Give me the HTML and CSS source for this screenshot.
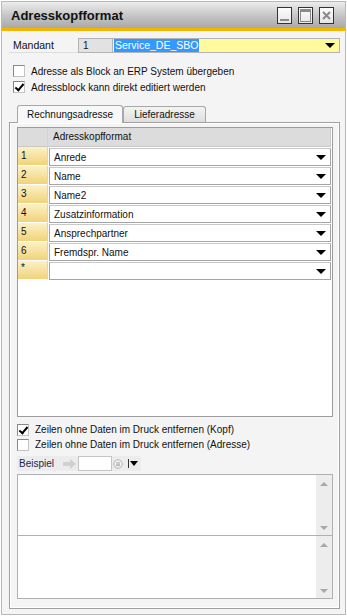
FILE: index.html
```html
<!DOCTYPE html>
<html>
  <head>
    <meta charset="utf-8">
    <title>Adresskopfformat</title>
    <link rel="stylesheet" href="styles.css">
  </head>
  <body>
  <div class="window">
    <header class="titlebar">
      <span class="title">Adresskopfformat</span>
      <div class="controls">
        <span class="ctl"><svg width="13" height="15" viewBox="0 0 13 15"><rect x="2" y="11" width="9" height="2" fill="#8a8a8a"/></svg></span>
        <span class="ctl"><svg width="13" height="15" viewBox="0 0 13 15"><rect x="1.5" y="1.5" width="10" height="12" fill="none" stroke="#8a8a8a"/><rect x="2" y="2" width="9" height="2" fill="#8a8a8a"/></svg></span>
        <span class="ctl"><svg width="13" height="15" viewBox="0 0 13 15"><path d="M3 4 L10 11 M10 4 L3 11" stroke="#8a8a8a" stroke-width="2"/></svg></span>
      </div>
    </header>

    <main class="content">
      <div class="mandant">
        <span class="label">Mandant</span>
        <span class="code">1</span>
        <span class="combo"><span class="sel">Service_DE_SBO</span><i class="arrow"></i></span>
      </div>

      <label class="check"><span class="box"></span>Adresse als Block an ERP System übergeben</label>
      <label class="check"><span class="box on"></span>Adressblock kann direkt editiert werden</label>

      <div class="tabs">
        <span class="tab active">Rechnungsadresse</span>
        <span class="tab">Lieferadresse</span>
      </div>

      <section class="panel">
        <div class="grid">
          <div class="row head"><span class="num"></span><span class="hcell">Adresskopfformat</span></div>
          <div class="row"><span class="num">1</span><span class="cell">Anrede<i class="arrow"></i></span></div>
          <div class="row"><span class="num">2</span><span class="cell">Name<i class="arrow"></i></span></div>
          <div class="row"><span class="num">3</span><span class="cell">Name2<i class="arrow"></i></span></div>
          <div class="row"><span class="num">4</span><span class="cell">Zusatzinformation<i class="arrow"></i></span></div>
          <div class="row"><span class="num">5</span><span class="cell">Ansprechpartner<i class="arrow"></i></span></div>
          <div class="row"><span class="num">6</span><span class="cell">Fremdspr. Name<i class="arrow"></i></span></div>
          <div class="row"><span class="num star">*</span><span class="cell"><i class="arrow"></i></span></div>
        </div>

        <label class="check small"><span class="box on"></span>Zeilen ohne Daten im Druck entfernen (Kopf)</label>
        <label class="check small"><span class="box"></span>Zeilen ohne Daten im Druck entfernen (Adresse)</label>

        <div class="beispiel">
          <span class="blabel">Beispiel</span>
          <svg width="14" height="10" viewBox="0 0 14 10"><path d="M0 3 H7 V0 L13 5 L7 10 V7 H0 Z" fill="#d0d0d0"/></svg>
          <span class="binput"></span>
          <svg width="10" height="10" viewBox="0 0 10 10"><circle cx="5" cy="5" r="4.2" fill="#f4f4f4" stroke="#b0b0b0"/><path d="M3 3.8 H7 M3 5.2 H7 M3 6.6 H7" stroke="#a0a0a0" stroke-width="0.8"/></svg>
          <span class="bsep"></span>
          <i class="arrow"></i>
        </div>

        <div class="memo">
          <div class="scroll"><i class="up"></i><i class="down"></i></div>
        </div>
        <div class="memo second">
          <div class="scroll"><i class="up"></i><i class="down"></i></div>
        </div>
      </section>
    </main>
  </div>
  </body>
</html>
```

FILE: styles.css
```css
* {
  box-sizing: border-box;
  margin: 0;
}

body, html {
  margin: 0;
  width: 100%;
  height: 100%;
  background: #fff;
  font-family: "Liberation Sans", Arial, sans-serif;
  font-size: 10px;
  color: #111;
}

.window {
  margin: 1px 0 0 1px;
  width: 345px;
  height: 614px;
  border: 1px solid #b8b8b8;
  background: #f4f4f4;
  display: flex;
  flex-direction: column;
}

.titlebar {
  height: 29px;
  flex: none;
  display: flex;
  align-items: center;
  justify-content: space-between;
  padding: 1px 11px 0 9px;
  background: linear-gradient(#ececec, #c4c4c4 55%, #a9a9a9);
  border-bottom: 3px solid #f2b600;
}

.title {
  font-weight: bold;
  font-size: 13px;
  color: #111;
}

.controls {
  display: flex;
  gap: 6px;
}

.ctl {
  width: 15px;
  height: 17px;
  border: 1px solid #333;
  background: linear-gradient(#fcfcfc, #e6e6e6);
  display: flex;
  align-items: center;
  justify-content: center;
}

.content {
  flex: 1;
  display: flex;
  flex-direction: column;
  padding: 7px 5px 6px 7px;
}

.mandant {
  display: flex;
  align-items: center;
  height: 15px;
  margin-bottom: 10px;
}

.label {
  width: 69px;
  padding-left: 4px;
  height: 15px;
  line-height: 14px;
  font-size: 10.5px;
  border-bottom: 1px solid #dedede;
}

.code {
  width: 35px;
  height: 15px;
  line-height: 13px;
  padding-left: 4px;
  background: #e2e2e2;
  border: 1px solid #b4b4b4;
}

.combo {
  flex: 1;
  height: 15px;
  display: flex;
  align-items: center;
  justify-content: space-between;
  padding: 0 4px 0 1px;
  background: #fffb9d;
  border: 1px solid #b4b4b4;
  border-left: none;
}

.sel {
  background: #3399ff;
  color: #fff;
  line-height: 13px;
  padding: 0 1px;
  font-size: 10.5px;
}

.arrow {
  display: inline-block;
  width: 0;
  height: 0;
  margin-left: auto;
  border-left: 5px solid transparent;
  border-right: 5px solid transparent;
  border-top: 5px solid #000;
}

.check {
  display: flex;
  align-items: center;
  height: 16px;
  padding-left: 4px;
}

.check.small {
  height: 15px;
  padding-left: 0;
}

.box {
  width: 12px;
  height: 12px;
  margin-right: 6px;
  background: #fff;
  border: 1px solid #888;
  border-right-color: #c4c4c4;
  border-bottom-color: #c4c4c4;
  position: relative;
}

.box.on::after {
  content: "";
  position: absolute;
  left: 3px;
  top: 0;
  width: 3px;
  height: 7px;
  border-right: 2px solid #000;
  border-bottom: 2px solid #000;
  transform: rotate(40deg);
}

.tabs {
  display: flex;
  align-items: flex-end;
  margin: 9px 0 0 8px;
  height: 18px;
}

.tab {
  height: 16px;
  padding: 0 10px;
  line-height: 15px;
  border: 1px solid #a8a8a8;
  border-bottom: none;
  border-radius: 3px 3px 0 0;
  background: linear-gradient(#f4f4f4, #dedede);
}

.tab.active {
  height: 18px;
  padding: 0 9px;
  line-height: 18px;
  background: #f8f8f8;
  position: relative;
  top: 1px;
}

.panel {
  flex: 1;
  display: flex;
  flex-direction: column;
  border: 1px solid #a0a0a0;
  box-shadow: inset 0 0 0 1px #fff;
  padding: 4px 6px 9px 7px;
}

.grid {
  height: 290px;
  background: #fff;
  border: 1px solid #9c9c9c;
  margin-bottom: 5px;
}

.row {
  display: flex;
  height: 19px;
}

.num {
  width: 30px;
  flex: none;
  padding: 3px 0 0 3px;
  background: linear-gradient(#fcf1c6, #f0d37a);
  border-bottom: 1px solid #fff;
  border-right: 1px solid #d4d4d4;
}

.num.star {
  padding-top: 1px;
}

.head .num,
.hcell {
  background: #dcdcdc;
  border-bottom: 1px solid #c8c8c8;
}

.hcell {
  flex: 1;
  padding: 3px 0 0 5px;
  margin-right: 1px;
  border-right: 1px solid #c8c8c8;
}

.cell {
  flex: 1;
  display: flex;
  align-items: center;
  padding: 0 4px 0 4px;
  margin: 1px 1px 0 1px;
  background: #fff;
  border: 1px solid #a4a4a4;
  border-top-color: #c8c8c8;
}

.beispiel {
  display: flex;
  align-items: center;
  width: 124px;
  height: 15px;
  margin: 4px 0 3px 0;
  padding-left: 2px;
  background: #ececec;
}

.blabel {
  color: #1a2550;
  width: 44px;
}

.binput {
  width: 34px;
  height: 15px;
  margin: 0 1px 0 1px;
  background: #fff;
  border: 1px solid #c4c4c4;
}

.bsep {
  width: 1px;
  height: 9px;
  margin: 0 1px 0 5px;
  background: #333;
}

.beispiel .arrow {
  margin-left: 0;
  border-left-width: 4px;
  border-right-width: 4px;
  border-top-width: 5px;
}

.memo {
  height: 61px;
  display: flex;
  justify-content: flex-end;
  background: #fff;
  border: 1px solid #b0b0b0;
  border-bottom: none;
}

.memo.second {
  height: 64px;
  border-bottom: 1px solid #b0b0b0;
}

.scroll {
  width: 16px;
  display: flex;
  flex-direction: column;
  justify-content: space-between;
  align-items: center;
  padding: 7px 0 5px;
  background: #ededed;
}

.up, .down {
  width: 0;
  height: 0;
  border-left: 4px solid transparent;
  border-right: 4px solid transparent;
}

.up {
  border-bottom: 4px solid #a8a8a8;
}

.down {
  border-top: 4px solid #a8a8a8;
}
```
